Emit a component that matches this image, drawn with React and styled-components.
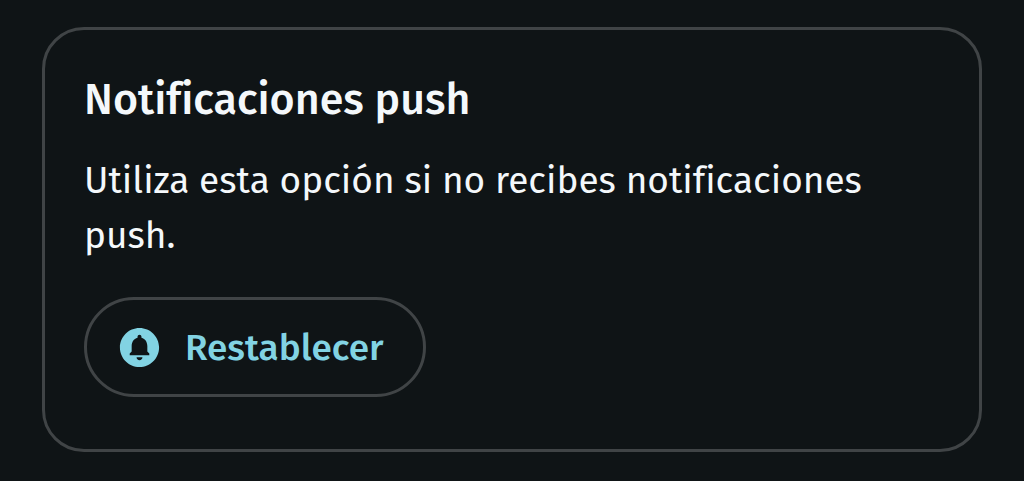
import React from 'react';
import styled, { createGlobalStyle } from 'styled-components';
import { MdCircleNotifications } from 'react-icons/md';

const GlobalStyle = createGlobalStyle`
  * {
    box-sizing: border-box;
  }

  body {
    margin: 0;
    background-color: #0f1416;
    color: #f4f8fb;
    font-family: 'Fira Sans', 'Noto Sans', sans-serif;
    font-variant-ligatures: none;
  }
`;

const Page = styled.main`
  padding: 27px 42px 29px;
`;

const Card = styled.section`
  padding: 40px 39px 52px;
  border: 3px solid #404446;
  border-radius: 42px;
`;

const Title = styled.h2`
  margin: 0;
  font-size: 43px;
  font-weight: 500;
  line-height: 60px;
`;

const Description = styled.p`
  margin: 23px 0 34px;
  font-size: 37px;
  line-height: 55px;
`;

const ResetButton = styled.button`
  display: flex;
  align-items: center;
  gap: 22px;
  height: 100px;
  padding: 0 39px 0 29px;
  border: 3px solid #404446;
  border-radius: 50px;
  background: transparent;
  color: #82d3e3;
  font: inherit;
  font-size: 37px;
  font-weight: 500;
  cursor: pointer;
`;

const App = () => {
  return (
    <>
      <GlobalStyle />
      <Page>
        <Card>
          <Title>Notificaciones push</Title>
          <Description>
            Utiliza esta opción si no recibes notificaciones push.
          </Description>
          <ResetButton type="button">
            <MdCircleNotifications size={47} aria-hidden="true" />
            Restablecer
          </ResetButton>
        </Card>
      </Page>
    </>
  );
};

export default App;
